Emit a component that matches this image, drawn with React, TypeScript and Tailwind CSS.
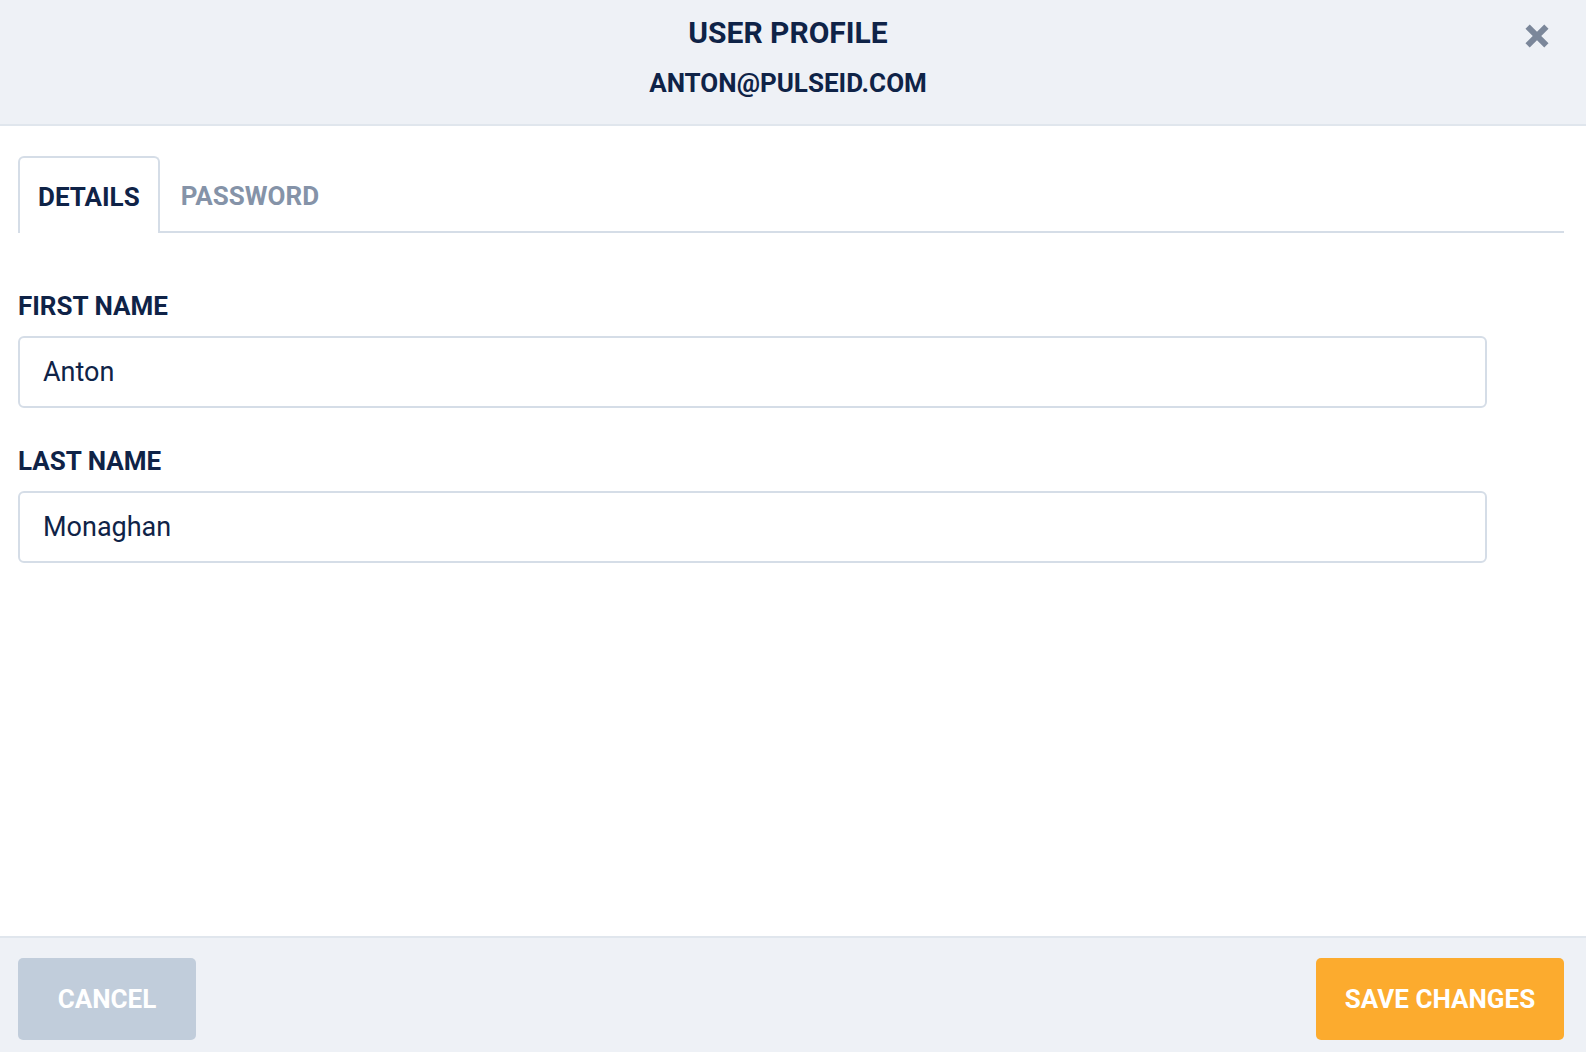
const font = "font-['Liberation_Sans_Narrow',Roboto,sans-serif]";

function CloseIcon() {
	return (
		<svg viewBox="0 0 24 24" className="h-[24px] w-[24px]" fill="none" stroke="currentColor" strokeWidth="6">
			<path d="M2.6 2.6L21.4 21.4M21.4 2.6L2.6 21.4" />
		</svg>
	);
}

function Field({ label, value }: { label: string; value: string }) {
	return (
		<div className="flex flex-col">
			<label className="text-[26px] font-bold leading-[34px] text-[#0f2347]">
				{label}
			</label>
			<input
				defaultValue={value}
				className="mt-[13px] h-[72px] w-[95%] rounded-[6px] border-2 border-[#d5dde7] bg-white px-[23px] text-[27px] text-[#0f2347] outline-none"
			/>
		</div>
	);
}

export default function App() {
	return (
		<div className={`flex h-screen flex-col bg-white ${font}`}>
			{/* Header */}
			<header className="relative flex h-[126px] shrink-0 flex-col items-center border-b-2 border-[#e0e6ed] bg-[#eef1f6] pr-[10px] pt-[15px]">
				<h1 className="text-[30px] font-bold leading-[36px] text-[#0f2347]">
					USER PROFILE
				</h1>
				<p className="mt-[16px] text-[26px] font-bold leading-[32px] text-[#0f2347]">
					ANTON@PULSEID.COM
				</p>
				<button className="absolute right-[37px] top-[24px] text-[#7b879a]">
					<CloseIcon />
				</button>
			</header>

			{/* Body */}
			<main className="flex-1 pl-[18px] pr-[22px] pt-[30px]">
				<div className="flex h-[77px] border-b-2 border-[#d5dde7]">
					<div className="-mb-[2px] flex h-[77px] items-center rounded-t-[6px] border-2 border-b-0 border-[#d5dde7] bg-white px-[18px] pt-[3px] text-[26px] font-bold text-[#0f2347]">
						DETAILS
					</div>
					<div className="flex items-center px-[21px] pt-[5px] text-[26px] font-bold text-[#8593a8]">
						PASSWORD
					</div>
				</div>

				<div className="mt-[56px] flex flex-col gap-[36px]">
					<Field label="FIRST NAME" value="Anton" />
					<Field label="LAST NAME" value="Monaghan" />
				</div>
			</main>

			{/* Footer */}
			<footer className="flex h-[116px] shrink-0 items-start justify-between border-t-2 border-[#e0e6ed] bg-[#eef1f6] pl-[18px] pr-[22px] pt-[20px]">
				<button className="h-[82px] w-[178px] rounded-[5px] bg-[#c1cddb] text-[26px] font-bold text-white">
					CANCEL
				</button>
				<button className="h-[82px] w-[248px] rounded-[5px] bg-[#fcab2e] text-[26px] font-bold text-white">
					SAVE CHANGES
				</button>
			</footer>
		</div>
	);
}
